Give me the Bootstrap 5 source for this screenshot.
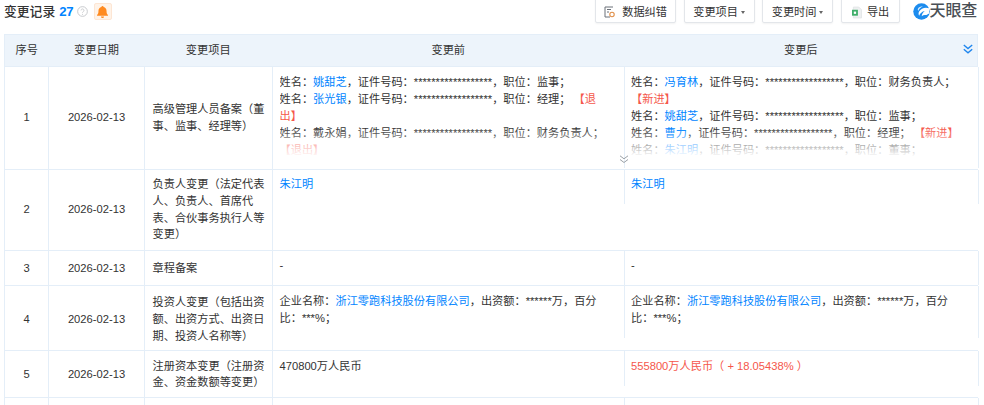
<!DOCTYPE html>
<html lang="zh-CN">
<head>
<meta charset="utf-8">
<title>变更记录</title>
<link rel="stylesheet" href="https://cdn.jsdelivr.net/npm/bootstrap@5.3.0/dist/css/bootstrap.min.css">
<style>
html,body{height:405px;overflow:hidden;background:#fff}
body{font-family:"Liberation Sans","Noto Sans CJK SC",sans-serif;font-size:11.2px;line-height:16.9px;color:#333}
.topbar{height:34px;padding-left:4px;padding-right:7px}
.ttl-group{padding-top:1px;margin-top:0}
.ttl{font-size:12.8px;font-weight:500;color:#333;line-height:21px}
.ttl-num{font-size:13.2px;font-weight:700;color:#0084ff;line-height:21px;margin-left:4px;letter-spacing:-.3px}
.help-ic{margin-left:3.500px;width:11px;height:11px}
.bell-box{margin-left:6px;width:18px;height:17px;background:#fff3e8;border:1px solid #fde6d4;border-radius:2px}
.tool-wrap{margin-top:-6px;gap:7.500px}
.tool-btn{height:29px;padding:8.500px 9px 0;font-size:11.2px;line-height:17px;color:#333;background:#fff;border:1px solid #e3e6ea;border-radius:2px;box-shadow:0 1px 2px rgba(0,0,0,.05);white-space:nowrap;display:flex;align-items:flex-start;justify-content:center}
.tool-btn:hover{background:#fff;color:#333;border-color:#e3e6ea}
.w1{width:81px}.w2{width:71px}.w3{width:59px}
.tool-btn.dropdown-toggle::after{border-top:3px solid #666;border-left:2.500px solid transparent;border-right:2.500px solid transparent;border-bottom:0;margin-left:3px;align-self:flex-start;margin-top:7px}
.tool-btn svg{margin-right:7px;margin-top:2px;flex:none}
.tool-btn.w3 svg{margin-right:5px;margin-left:1px}
.brand{margin-left:5.500px;margin-top:6px;height:22px}
.brand-txt{font-size:16px;line-height:22px;font-weight:500;color:#4a4f55;letter-spacing:-.2px}
.log-tbl{margin:-.5px 0 0 4px;width:973px;table-layout:fixed;border-collapse:collapse;border-color:#e4eef8;color:#333}
.log-tbl>:not(caption)>*>*{padding:0 4px 0 7.500px;border:1px solid #e4eef8;color:#333;background:transparent;box-shadow:none}
.log-tbl thead th{background:#edf4fb;font-weight:400;text-align:center;vertical-align:middle;height:32px;position:relative;padding:0;border-left:0;border-right:0}
.log-tbl thead th:first-child{border-left:1px solid #e4eef8}
.log-tbl thead th:last-child{border-right:1px solid #e4eef8}
.log-tbl tbody td.mid{vertical-align:middle}
.log-tbl tbody td.ctr{text-align:center;padding:0}
.log-tbl tbody td.txtop{vertical-align:top;padding:6.500px 7px 6px 7px;border-right:0}
.log-tbl tbody td.aft{vertical-align:top;padding:0;border-left:0;border-right:0}
.log-tbl tbody .r4 td.mid{padding-top:1.500px}
.aft-in{padding:6.500px 8px 11.500px 6.500px;border-left:1px solid #e4eef8;border-right:1px solid #e4eef8;margin-left:-1px;margin-right:-1px}
.c1{width:44px}.c2{width:96px}.c3{width:127.500px}.c4{width:352.500px}.c5{width:353px}
.r1{height:103px}.r2{height:81px}.r3{height:35px}.r4{height:65px}.r5{height:47px}.r6{height:40px}
.clip-box{height:88px;overflow:hidden;position:relative;margin-top:1px}
.clip-box::after{content:"";position:absolute;left:0;right:0;bottom:0;height:34px;background:linear-gradient(to bottom,rgba(255,255,255,0),#fff 85%)}
.r1cell{position:relative}
.more-ic{position:absolute;right:-4px;bottom:5px;z-index:2}
.all-ic{position:absolute;right:4px;top:9px}
.lk{color:#0084ff;text-decoration:none}
.rd{color:#f5574b}
.aft-fix{height:101px}
</style>
</head>
<body>
<div class="topbar d-flex justify-content-between align-items-start">
  <div class="d-flex align-items-center ttl-group">
    <span class="ttl">变更记录</span><span class="ttl-num">27</span>
    <svg class="help-ic" viewBox="0 0 12 12"><circle cx="6" cy="6" r="5.300" fill="none" stroke="#c4c6c9" stroke-width="1"/><path d="M4.400 4.800a1.600 1.600 0 1 1 2.400 1.400c-.5.300-.8.600-.8 1.100" fill="none" stroke="#c4c6c9" stroke-width="1"/><circle cx="6" cy="9" r=".6" fill="#c4c6c9"/></svg>
    <span class="bell-box d-flex align-items-center justify-content-center">
      <svg width="11" height="12" viewBox="0 0 10 11"><path d="M5 0a1 1 0 0 1 1 1c1.800.4 2.700 1.800 2.700 3.600 0 2 .4 2.800 1.300 3.700V9H0v-.7c.9-.9 1.300-1.700 1.300-3.700C1.300 2.800 2.200 1.400 4 1a1 1 0 0 1 1-1zM3.600 9.600h2.800a1.400 1.400 0 0 1-2.800 0z" fill="#ff8a1f"/></svg>
    </span>
  </div>
  <div class="d-flex tool-wrap">
    <button type="button" class="btn tool-btn w1"><svg width="11" height="12" viewBox="0 0 11 12"><path d="M9 1H1v10h5" fill="none" stroke="#6b7078" stroke-width="1"/><path d="M3 3.500h4M3 6h2" stroke="#6b7078" stroke-width="1"/><circle cx="8" cy="8.500" r="2.200" fill="none" stroke="#e0904a" stroke-width="1.100"/></svg>数据纠错</button>
    <button type="button" class="btn tool-btn w2 dropdown-toggle">变更项目</button>
    <button type="button" class="btn tool-btn w2 dropdown-toggle">变更时间</button>
    <button type="button" class="btn tool-btn w3"><svg width="10" height="13" viewBox="0 0 11 13"><path d="M1.500.5h6l3 3v9h-9z" fill="#eef0f1" stroke="#dfe2e4" stroke-width=".8"/><rect x="0" y="3.500" width="6.500" height="6.500" fill="#3fae6a"/><rect x="2" y="5.500" width="2.500" height="2.500" fill="#fff"/></svg>导出</button>
    <div class="brand d-flex align-items-center">
      <svg width="17" height="17" viewBox="0 0 18 18"><circle cx="9" cy="9" r="8.700" fill="#1c8cee"/><path d="M17 5.500C13 4 8.500 5.500 6.500 9c-.8 1.500-.8 3 0 4.500 1-2.500 3-4.500 6-5-1.800 1.300-3 3-3.300 5.500 1.500-1.300 3-1.700 5-1.200L17 11z" fill="#fff"/><path d="M5 6.500C6 4.500 8 3.500 10.500 3.500 8 4.800 6.500 6 5.500 8.500z" fill="#fff" opacity=".85"/></svg>
      <span class="brand-txt">天眼查</span>
    </div>
  </div>
</div>
<table class="table table-bordered log-tbl">
  <thead>
    <tr>
      <th class="c1">序号</th>
      <th class="c2">变更日期</th>
      <th class="c3">变更项目</th>
      <th class="c4">变更前</th>
      <th class="c5">变更后
        <svg class="all-ic" width="10" height="10" viewBox="0 0 10 10"><path d="M.8 1l4.200 3.500L9.200 1M.8 5.200L5 8.800l4.200-3.600" fill="none" stroke="#1f86ee" stroke-width="1.400"/></svg>
      </th>
    </tr>
  </thead>
  <tbody>
    <tr class="r1">
      <td class="mid ctr">1</td>
      <td class="mid ctr">2026-02-13</td>
      <td class="mid">高级管理人员备案（董事、监事、经理等）</td>
      <td class="txtop r1cell">
        <div class="clip-box">
          姓名：<a class="lk" href="#">姚甜芝</a>，证件号码：******************，职位：监事；<br>
          姓名：<a class="lk" href="#">张光银</a>，证件号码：******************，职位：经理； <span class="rd">【退出】</span><br>
          姓名：戴永娟，证件号码：******************，职位：财务负责人； <span class="rd">【退出】</span>
        </div>
        <svg class="more-ic" width="10" height="9" viewBox="0 0 10 9"><path d="M1 .8l4 3 4-3M1 4.500l4 3 4-3" fill="none" stroke="#9aa0a6" stroke-width="1"/></svg>
      </td>
      <td class="aft">
        <div class="aft-in aft-fix">
          <div class="clip-box">
            姓名：<a class="lk" href="#">冯育林</a>，证件号码：******************，职位：财务负责人； <span class="rd">【新进】</span><br>
            姓名：<a class="lk" href="#">姚甜芝</a>，证件号码：******************，职位：监事；<br>
            姓名：<a class="lk" href="#">曹力</a>，证件号码：******************，职位：经理； <span class="rd">【新进】</span><br>
            姓名：<a class="lk" href="#">朱江明</a>，证件号码：******************，职位：董事；
          </div>
        </div>
      </td>
    </tr>
    <tr class="r2">
      <td class="mid ctr">2</td>
      <td class="mid ctr">2026-02-13</td>
      <td class="mid">负责人变更（法定代表人、负责人、首席代表、合伙事务执行人等变更）</td>
      <td class="txtop"><a class="lk" href="#">朱江明</a></td>
      <td class="aft"><div class="aft-in"><a class="lk" href="#">朱江明</a></div></td>
    </tr>
    <tr class="r3">
      <td class="mid ctr">3</td>
      <td class="mid ctr">2026-02-13</td>
      <td class="mid">章程备案</td>
      <td class="txtop">-</td>
      <td class="aft"><div class="aft-in">-</div></td>
    </tr>
    <tr class="r4">
      <td class="mid ctr">4</td>
      <td class="mid ctr">2026-02-13</td>
      <td class="mid">投资人变更（包括出资额、出资方式、出资日期、投资人名称等）</td>
      <td class="txtop">企业名称：<a class="lk" href="#">浙江零跑科技股份有限公司</a>，出资额：******万，百分比：***%；</td>
      <td class="aft"><div class="aft-in">企业名称：<a class="lk" href="#">浙江零跑科技股份有限公司</a>，出资额：******万，百分比：***%；</div></td>
    </tr>
    <tr class="r5">
      <td class="mid ctr">5</td>
      <td class="mid ctr">2026-02-13</td>
      <td class="mid">注册资本变更（注册资金、资金数额等变更）</td>
      <td class="txtop">470800万人民币</td>
      <td class="aft"><div class="aft-in rd">555800万人民币（ + 18.05438% ）</div></td>
    </tr>
    <tr class="r6">
      <td></td><td></td><td></td><td class="txtop"></td><td class="aft"><div class="aft-in aft-fix"></div></td>
    </tr>
  </tbody>
</table>
<script src="https://cdn.jsdelivr.net/npm/bootstrap@5.3.0/dist/js/bootstrap.bundle.min.js"></script>
</body>
</html>
